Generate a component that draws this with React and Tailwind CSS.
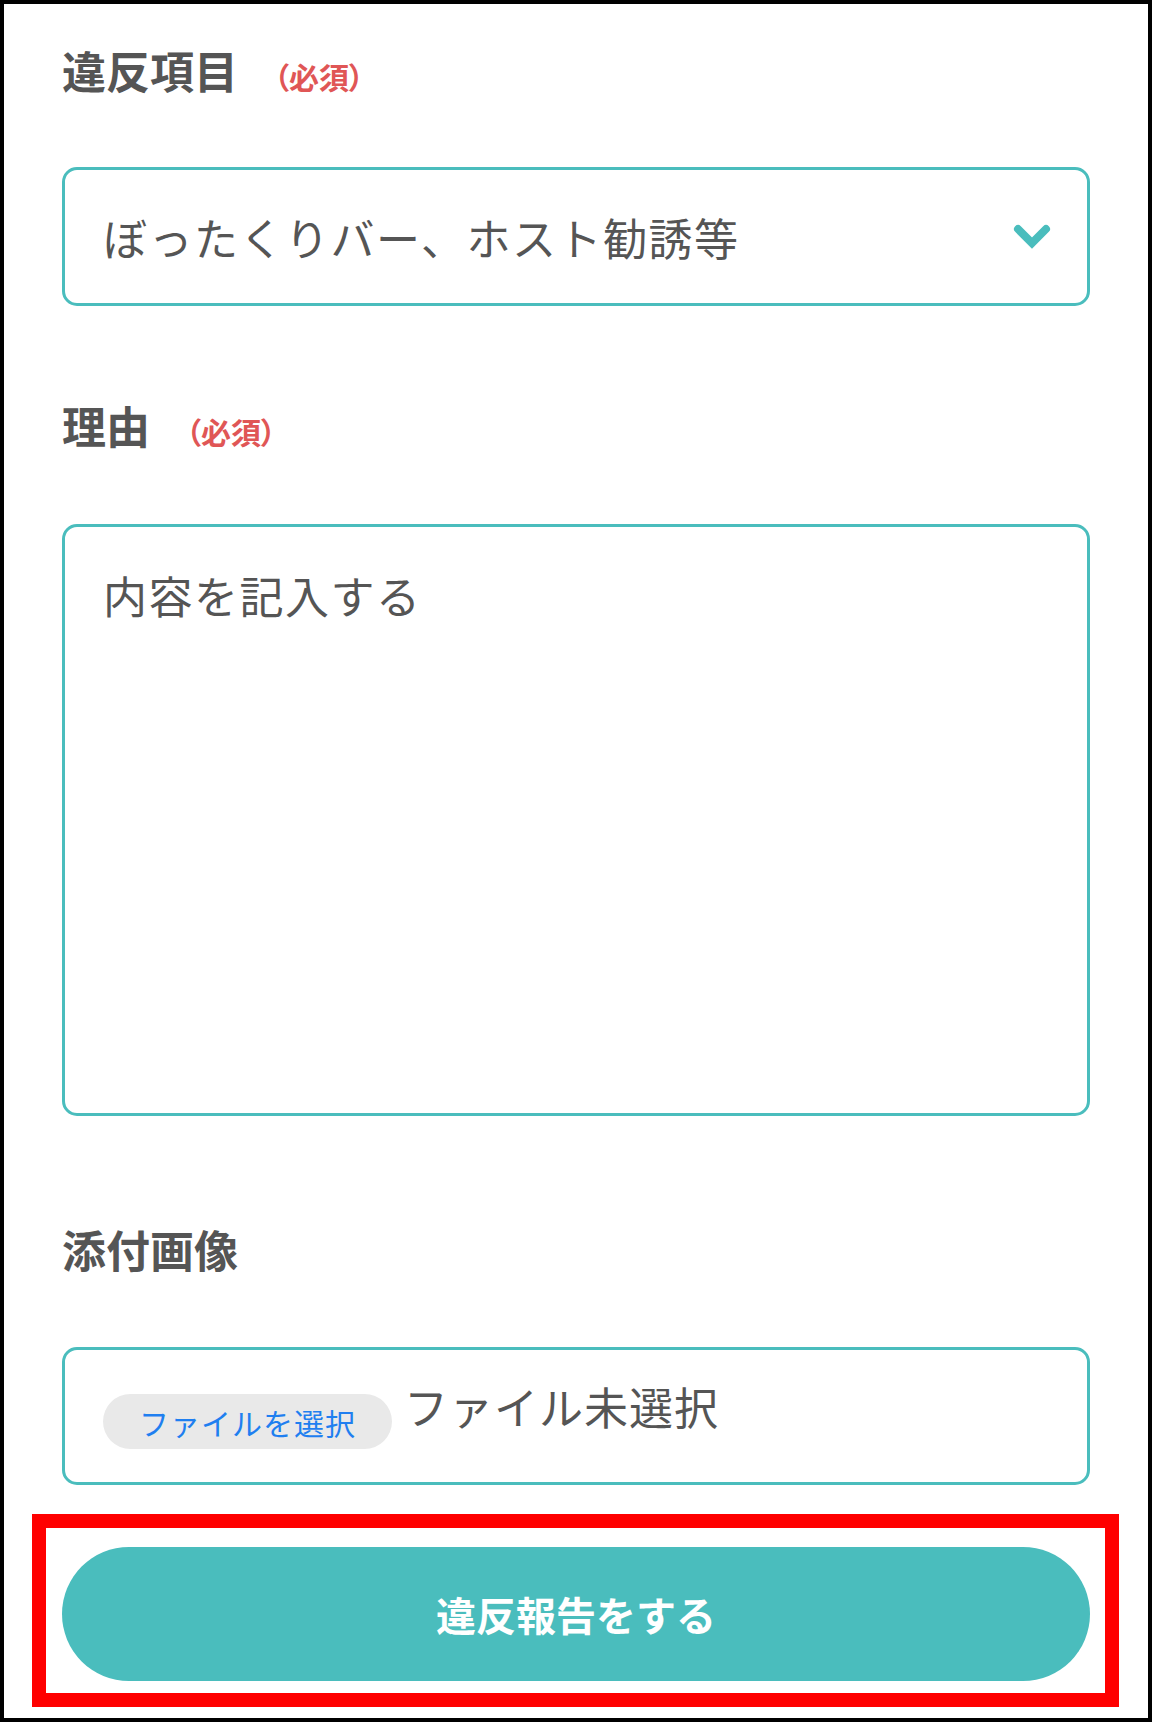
import React from "react";

const font = "font-['Noto_Sans_CJK_JP','Noto_Sans',sans-serif]";

function Label({ text, required, className }) {
  return (
    <div className={`flex items-baseline ${className}`}>
      <span className="text-[44px] leading-[44px] font-bold text-[#555555]">
        {text}
      </span>
      {required && (
        <span className="ml-[36px] text-[30px] leading-[30px] font-bold text-[#e05656] [font-feature-settings:'palt']">
          （必須）
        </span>
      )}
    </div>
  );
}

function Chevron() {
  return (
    <svg width="38" height="26" viewBox="0 0 38 26" fill="none">
      <polyline
        points="5,5 19,19 33,5"
        stroke="#4abdbd"
        strokeWidth="8"
        strokeLinecap="round"
        strokeLinejoin="miter"
      />
    </svg>
  );
}

const App = () => {
  return (
    <div
      className={`w-[1152px] h-[1722px] border-[4px] border-black bg-white ${font}`}
    >
      <form className="px-[58px] pt-[44px]">
        {/* violation item */}
        <Label text="違反項目" required />
        <div className="mt-[75px] h-[139px] flex items-center justify-between border-[3px] border-[#4abdbd] rounded-[15px] pl-[38px] pr-[36px]">
          <span className="text-[44px] leading-[44px] text-[#555555] tracking-[1.5px]">
            ぼったくりバー、ホスト勧誘等
          </span>
          <Chevron />
        </div>

        {/* reason */}
        <Label text="理由" required className="mt-[97px]" />
        <textarea
          placeholder="内容を記入する"
          className="mt-[77px] block w-full h-[592px] resize-none border-[3px] border-[#4abdbd] rounded-[15px] pl-[38px] pt-[46px] text-[44px] leading-[44px] text-[#555555] placeholder:text-[#555555] tracking-[1.5px] outline-none"
        />

        {/* attachment */}
        <Label text="添付画像" className="mt-[111px]" />
        <div className="mt-[76px] h-[138px] flex items-start border-[3px] border-[#4abdbd] rounded-[15px] pl-[38px] pt-[34px]">
          <button
            type="button"
            className="mt-[10px] h-[55px] px-[36px] rounded-full bg-[#e9e9e9] text-[30px] leading-[30px] tracking-[1px] text-[#1f7ff0]"
          >
            ファイルを選択
          </button>
          <span className="ml-[12px] text-[44px] leading-[44px] tracking-[1px] text-[#555555]">
            ファイル未選択
          </span>
        </div>
      </form>

      {/* highlighted submit */}
      <div className="mt-[29px] ml-[28px] w-[1087px] border-[14px] border-[#ff0000] pl-[16px] pr-[15px] pt-[19px] pb-[12px]">
        <button
          type="button"
          className="w-full h-[134px] rounded-full bg-[#4abdbd] flex items-center justify-center text-[40px] leading-[40px] font-bold text-white"
        >
          違反報告をする
        </button>
      </div>
    </div>
  );
};

export default App;
